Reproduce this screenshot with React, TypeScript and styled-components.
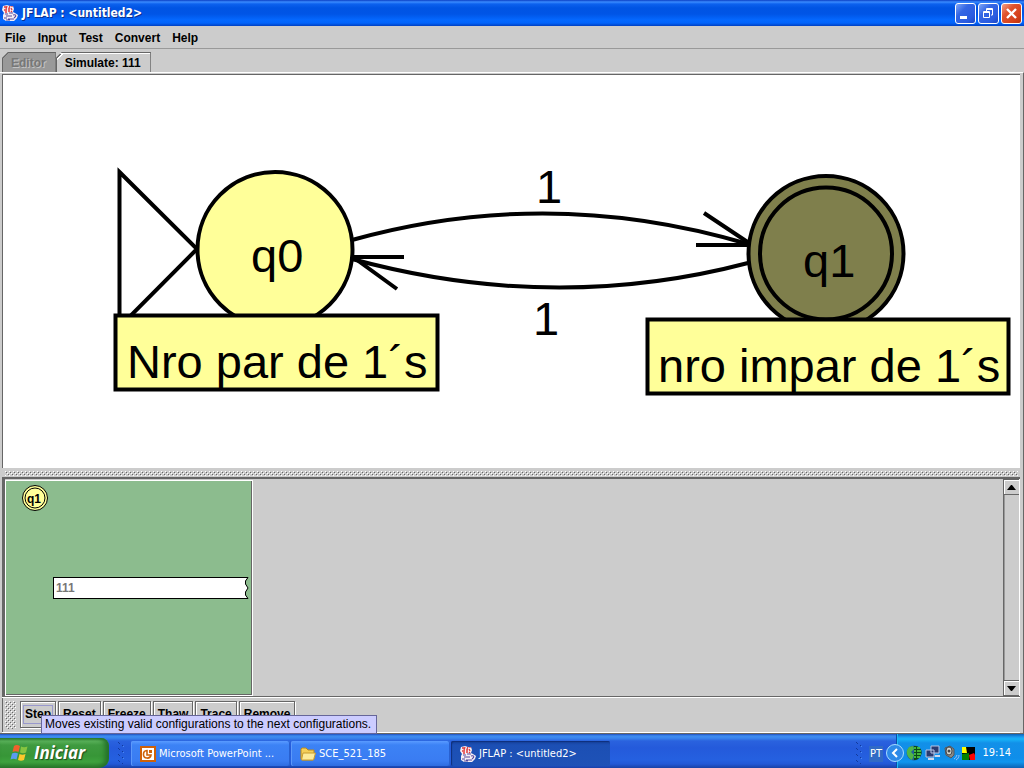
import React from "react";
import styled, { createGlobalStyle, css } from "styled-components";

const GlobalStyle = createGlobalStyle`
  *, *::before, *::after { box-sizing: border-box; }
  body { margin: 0; background: #ccc; font-family: "Liberation Sans", Arial, sans-serif; }
  button { font: inherit; color: inherit; padding: 0; border: 0; background: none; cursor: default; }
`;

const dot = (color: string) =>
  `conic-gradient(from 270deg at 1px 1px, ${color} 90deg, transparent 0)`;

const bumps = css`
  background-image: ${dot("#fff")}, ${dot("#fff")}, ${dot("#666")}, ${dot("#666")};
  background-size: 4px 4px;
  background-position: 0 0, 2px 2px, 1px 1px, 3px 3px;
`;

const Desktop = styled.div`
  min-height: 100vh;
  display: flex;
  flex-direction: column;
  background: #ccc;
`;

const TitleBar = styled.header`
  height: 26px;
  display: flex;
  align-items: center;
  gap: 4px;
  padding: 0 2px;
  background: linear-gradient(#0b3fc4 0, #3a8bff 2px, #0c61ee 4px, #0054e3 8px, #0055e6 14px, #0468ff 20px, #0264fb 23px, #0040c2 26px);
`;

const Title = styled.h1`
  flex: 1;
  margin: 0;
  font: bold 12px/16px "DejaVu Sans Condensed", "DejaVu Sans", sans-serif;
  color: #fff;
  text-shadow: 1px 1px #0b2f8c;
`;

const CaptionButtons = styled.div`
  display: flex;
  gap: 2px;
`;

const CaptionButton = styled.button<{ $close?: boolean }>`
  width: 21px;
  height: 21px;
  display: grid;
  place-items: center;
  border: 1px solid #fff;
  border-radius: 3px;
  background: ${(p) =>
    p.$close
      ? "linear-gradient(135deg, #f0a088 0, #e0532e 35%, #d4401a 75%, #b8330f)"
      : "linear-gradient(135deg, #7fa6f8 0, #3466e4 35%, #2a5be0 75%, #1b46c4)"};
`;

const MenuBar = styled.nav`
  height: 23px;
  display: flex;
  align-items: flex-end;
  gap: 12px;
  padding: 0 5px 2px;
  border-bottom: 1px solid #999;
`;

const MenuItem = styled.button`
  font-size: 12px;
  line-height: 16px;
  font-weight: bold;
`;

const TabBar = styled.div`
  height: 23px;
  display: flex;
  align-items: flex-end;
  padding-left: 2px;
`;

const Tab = styled.button<{ $selected?: boolean }>`
  height: 20px;
  padding: 0 9px 0 8px;
  font-size: 12px;
  line-height: 18px;
  font-weight: bold;
  border: solid #666;
  border-width: 1px 1px 0;
  clip-path: polygon(6px 0, 100% 0, 100% 100%, 0 100%, 0 6px);
  background:
    linear-gradient(135deg, ${(p) => (p.$selected ? "#666 0 4px, #fff 4px 5px" : "#666 0 4px, #999 4px 5px")}, transparent 5px),
    ${(p) => (p.$selected ? "#ccc" : "#999")};
  ${(p) =>
    p.$selected
      ? "box-shadow: inset 0 1px #fff;"
      : "color: #777; text-shadow: 1px 1px #c4c4c4;"}
`;

const Workspace = styled.main`
  flex: 1;
  display: flex;
  flex-direction: column;
  padding: 0 3px 0 2px;
  border-top: 1px solid #fff;
  border-right: 1px solid #666;
  border-bottom: 1px solid #666;
`;

const Canvas = styled.section`
  flex: 1;
  display: flex;
  min-height: 394px;
  margin-top: 1px;
  border: solid #666;
  border-width: 1px 0 0 1px;
  background: #fff;
`;

const Diagram = styled.svg`
  flex: 1;
  width: 100%;
  display: block;
  font-family: "Liberation Sans", Arial, sans-serif;
  font-size: 47px;
`;

const Splitter = styled.div`
  height: 9px;
  padding: 3px 2px 1px 3px;
  display: flex;
`;

const SplitterGrip = styled.div`
  flex: 1;
  ${bumps}
`;

const ConfigPane = styled.section`
  height: 220px;
  display: flex;
  border: solid #666;
  border-width: 2px 0 1px 3px;
`;

const ConfigList = styled.div`
  flex: 1;
  display: flex;
  padding-top: 1px;
`;

const ConfigCard = styled.article`
  width: 248px;
  display: flex;
  flex-direction: column;
  gap: 65px;
  padding: 3px 3px 0 15px;
  background: #8cbc8e;
  border: 1px solid #fff;
  box-shadow: inset -1px -1px #666;
`;

const Tape = styled.div`
  display: flex;
  margin-left: 32px;
  height: 22px;
`;

const TapeText = styled.span`
  flex: 1;
  padding: 0 2px;
  border: solid #000;
  border-width: 1px 0 1px 1px;
  background: #fff;
  color: #777;
  font-size: 12px;
  line-height: 21px;
  font-weight: bold;
`;

const ScrollBar = styled.div`
  width: 17px;
  display: flex;
  flex-direction: column;
  justify-content: space-between;
  border-left: 1px solid #666;
  border-right: 1px solid #fff;
  box-shadow: inset 1px 0 #999;
`;

const ScrollButton = styled.button`
  height: 16px;
  display: grid;
  place-items: center;
  border: 1px solid #666;
  border-width: 1px 0 1px 0;
  box-shadow: inset 1px 1px #fff;
`;

const ToolBar = styled.div`
  height: 36px;
  display: flex;
  align-items: flex-start;
  gap: 2px;
  padding: 3px 2px;
  border: solid #fff;
  border-width: 1px 0 1px 0;
  box-shadow: inset 1px 0 #666, 0 -1px #666;
`;

const ToolGrip = styled.div`
  width: 11px;
  height: 28px;
  margin: 0 2px 0 1px;
  ${bumps}
`;

const ToolButton = styled.button<{ $focused?: boolean }>`
  height: 27px;
  padding: 0 2px;
  border: 1px solid #666;
  box-shadow: inset 1px 1px #fff, 1px 1px #fff;
  font-size: 12px;
  line-height: 17px;
  font-weight: bold;
  span {
    display: block;
    padding: 0 1px;
    border: 1px solid ${(p) => (p.$focused ? "#9999cc" : "transparent")};
  }
`;

const StepHolder = styled.div`
  position: relative;
  display: flex;
`;

const ToolTip = styled.div`
  position: absolute;
  z-index: 1;
  left: 21px;
  top: 14px;
  padding: 0 5px 0 3px;
  border: 1px solid #666699;
  background: #ccccff;
  font-size: 12px;
  line-height: 17px;
  white-space: nowrap;
`;

const TaskBar = styled.footer`
  height: 34px;
  display: flex;
  align-items: stretch;
  background: linear-gradient(#1f4fc0 0, #3d8cf0 2px, #3a86ee 4px, #2a62de 7px, #245adb 14px, #2560e0 26px, #2358d6 30px, #1941a5 34px);
  font: 11px/16px "DejaVu Sans Condensed", "DejaVu Sans", sans-serif;
  color: #fff;
`;

const StartButton = styled.button`
  width: 109px;
  margin-top: 4px;
  padding: 0 0 0 10px;
  display: flex;
  align-items: center;
  gap: 5px;
  border-radius: 0 8px 10px 0;
  background: linear-gradient(#2f7d31 0, #5cb45c 3px, #3f9a40 7px, #379637 18px, #3ea23e 24px, #2b7a2c 30px);
  box-shadow: inset -4px 0 5px #24702a;
  font: italic bold 17px/20px "Open Sans", "Liberation Sans", sans-serif;
  text-shadow: 1px 1px 1px #1c4a1c;
`;

const TaskGrip = styled.div<{ $push?: boolean }>`
  width: 8px;
  margin: 8px 5px 4px ${(p) => (p.$push ? "auto" : "9px")};
  background-image: ${dot("#123a9c")}, ${dot("#123a9c")}, ${dot("#123a9c")}, ${dot("#4b8af2")};
  background-size: 8px 6px;
  background-position: 0 0, 1px 1px, 4px 3px, 5px 4px;
`;

const TaskList = styled.div`
  flex: 0 1 479px;
  display: grid;
  grid-template-columns: repeat(3, 1fr);
  gap: 1px;
  padding: 7px 0 2px;
`;

const TaskButton = styled.button<{ $active?: boolean }>`
  min-width: 0;
  display: flex;
  align-items: center;
  gap: 3px;
  padding: 0 9px;
  border-radius: 2px;
  white-space: nowrap;
  background: ${(p) =>
    p.$active
      ? "linear-gradient(#153f98, #1c4fb4 4px, #1e52b7)"
      : "linear-gradient(#5a9bff, #3c82f5 4px, #3a7cf2 20px, #2f6de0)"};
  box-shadow: ${(p) => (p.$active ? "inset 1px 1px 1px #0f2f7c" : "inset -1px 0 #2860d0, inset 1px 0 #5c98fa")};
`;

const Language = styled.button`
  align-self: flex-end;
  margin-bottom: 6px;
  height: 16px;
  padding: 0 1px;
  background: #316ac5;
`;

const Tray = styled.div`
  position: relative;
  width: 128px;
  display: flex;
  align-items: center;
  justify-content: space-between;
  margin-left: 13px;
  padding: 4px 13px 0 10px;
  background: linear-gradient(#0e62b8 0, #1a9cf0 3px, #18b4f8 5px, #1290e8 9px, #0f8eea 24px, #1096ee 28px, #0d62b4 34px);
  box-shadow: inset 1px 0 #0b4ca8, inset 2px 0 #1dbbf6;
`;

const TrayIcons = styled.div`
  display: flex;
  align-items: center;
  gap: 2px;
`;

const CollapseButton = styled.button`
  position: absolute;
  left: -10px;
  top: 10px;
  width: 18px;
  height: 18px;
`;

const JavaIcon = () => (
  <svg width="16" height="16" viewBox="0 0 16 16" aria-hidden="true">
    <path d="M1 1l4-1 3 1 3 0 1 3-1 3 2 1 3 2-1 3-3 3H4l-3-2 0-4 1-2-2-3z" fill="#f6eef4" />
    <path d="M2 2h2M5 1l-1 3M6 4h2M8 1l-1 2M9 3l1 2M2 5h3M6 6h2M9 7l1-1M3 7h2M10 1v1" fill="none" stroke="#e23a3a" strokeWidth="1.300" />
    <path d="M3 9h3M7 8h4M4 11h6M2 13h3M6 14h6M11 10c3-1 4 1 1 3M4 15h4" fill="none" stroke="#55489c" strokeWidth="1.100" />
  </svg>
);

const WindowsFlag = () => (
  <svg width="19" height="18" viewBox="0 0 19 18" aria-hidden="true">
    <path d="M4 2c2-1.500 4-1 6 0L8.500 8c-2-1-4-1-6 0z" fill="#f0602c" />
    <path d="M11 2.500c2 1 4 1 6.500 0L16 8.500c-2 1-4 1-6 0z" fill="#86c440" />
    <path d="M2 9.500c2-1 4-1 6 0L6.500 15.500c-2-1-4-1-6 0z" fill="#5a9cf0" />
    <path d="M9.500 10c2 1 4 1 6 0L14 16c-2 1-4 1-6 0z" fill="#fcc82c" />
  </svg>
);

const PowerPointIcon = () => (
  <svg width="16" height="16" viewBox="0 0 16 16" aria-hidden="true">
    <path d="M0 0h16v16H0z" fill="#cf6109" />
    <path d="M2 2h12v12H2z" fill="#fff" />
    <path d="M7 4.500A3.800 3.800 0 1 0 11 9H7z" fill="none" stroke="#cf6109" strokeWidth="1.600" />
    <path d="M9 4h3v3H9z" fill="#cf6109" />
  </svg>
);

const FolderIcon = () => (
  <svg width="16" height="16" viewBox="0 0 16 16" aria-hidden="true">
    <path d="M1 3l1-1h4l2 2h6v9l-1 1H2l-1-1z" fill="#f4cf58" stroke="#b88a20" strokeWidth="1" />
    <path d="M3 7h12.500l-2 7H1.500z" fill="#fdeb98" stroke="#c89c30" strokeWidth="1" />
  </svg>
);

const GlobeIcon = () => (
  <svg width="17" height="16" viewBox="0 0 17 16" aria-hidden="true">
    <circle cx="8" cy="8" r="7.500" fill="#1f5f9c" />
    <path d="M3 2l4-1 1 3-3 3 3 3-2 5C2 13 0 9 1 5z" fill="#4fb648" />
    <path d="M8 1c6-1 9 5 7 9s-4 5-7 5z" fill="#0b4a16" />
    <path d="M8 3h2M11 3h3M8 6h2M11 6h4M8 9h2M11 9h4M8 12h2M11 12h3" stroke="#55dc48" strokeWidth="1.500" />
  </svg>
);

const NetworkIcon = () => (
  <svg width="16" height="16" viewBox="0 0 16 16" aria-hidden="true">
    <path d="M6 1h8v7H6zM1 5h8v7H1z" fill="#2a3a70" stroke="#b8c4e4" />
    <path d="M10 10h5v2h-5zM3 13h6v2H3z" fill="#d0d8ec" />
  </svg>
);

const SpeakerIcon = () => (
  <svg width="17" height="16" viewBox="0 0 17 16" aria-hidden="true">
    <path d="M2 3l5-2 4 3v6l-3 3-5-3z" fill="#8a8a86" stroke="#55565a" />
    <ellipse cx="6" cy="6" rx="3" ry="4" fill="#d8d8d0" stroke="#44464c" />
    <circle cx="6" cy="6" r="1.500" fill="#44464c" />
    <path d="M11 14c2-1 2-2 3-4M13 15c2-1 3-3 3-5" fill="none" stroke="#9cc4fa" />
  </svg>
);

const BlocksIcon = () => (
  <svg width="13" height="13" viewBox="0 0 13 13" aria-hidden="true">
    <path d="M0 0h13v13H0z" fill="#000" />
    <path d="M0 0h4l1 6H0z" fill="#ff0" />
    <path d="M0 7l7-1v7H0z" fill="#008000" />
    <path d="M7 8l5-2 1 2v5H8z" fill="#f00" />
  </svg>
);

const menus = ["File", "Input", "Test", "Convert", "Help"];
const actions = ["Reset", "Freeze", "Thaw", "Trace", "Remove"];

const Automaton = () => (
  <Diagram role="img" aria-label="Finite automaton">
    <g fill="none" stroke="#000" strokeWidth="4">
      <path d="M349 165Q546 110 745 169" />
      <path d="M701 138L746 168M693 170H746" />
      <path d="M745 188Q551 239 349 184" />
      <path d="M401 182H350L394 214" />
      <path d="M116.500 97L194 174L116.500 252Z" />
    </g>
    <g stroke="#000" strokeWidth="4">
      <circle cx="272" cy="174.500" r="77.500" fill="#ffff99" />
      <circle cx="823" cy="178.500" r="77.500" fill="#7f7f4c" />
      <circle cx="823" cy="178.500" r="66" fill="none" />
      <rect x="112.500" y="240.500" width="322" height="74" fill="#ffff99" />
      <rect x="644.500" y="244.500" width="361" height="74" fill="#ffff99" />
    </g>
    <text x="248" y="197">q0</text>
    <text x="800" y="202">q1</text>
    <text x="533" y="128">1</text>
    <text x="530" y="260">1</text>
    <text x="124" y="303">Nro par de 1´s</text>
    <text x="655" y="307">nro impar de 1´s</text>
  </Diagram>
);

export default function App() {
  return (
    <>
      <GlobalStyle />
      <Desktop>
        <TitleBar>
          <JavaIcon />
          <Title>JFLAP : &lt;untitled2&gt;</Title>
          <CaptionButtons>
            <CaptionButton aria-label="Minimize">
              <svg width="19" height="19"><path d="M4 12h7v3H4z" fill="#fff" /></svg>
            </CaptionButton>
            <CaptionButton aria-label="Restore">
              <svg width="19" height="19" fill="none" stroke="#fff">
                <path d="M7.500 7V4.500h6V11H12M7 5.500h7" />
                <path d="M4.500 7.500h6v6h-6zM4 8.500h7" />
              </svg>
            </CaptionButton>
            <CaptionButton $close aria-label="Close">
              <svg width="19" height="19"><path d="M5 5l9 9M14 5l-9 9" stroke="#fff" strokeWidth="2.400" /></svg>
            </CaptionButton>
          </CaptionButtons>
        </TitleBar>
        <MenuBar>
          {menus.map((m) => <MenuItem key={m}>{m}</MenuItem>)}
        </MenuBar>
        <TabBar role="tablist">
          <Tab role="tab" disabled>Editor</Tab>
          <Tab role="tab" $selected aria-selected="true">Simulate: 111</Tab>
        </TabBar>
        <Workspace>
          <Canvas><Automaton /></Canvas>
          <Splitter><SplitterGrip /></Splitter>
          <ConfigPane>
            <ConfigList>
              <ConfigCard>
                <svg width="28" height="28" viewBox="0 0 28 28" role="img" aria-label="State q1">
                  <circle cx="14" cy="14" r="12.500" fill="#ffff99" stroke="#000" />
                  <circle cx="14" cy="14" r="10" fill="none" stroke="#000" />
                  <text x="6" y="19" fontSize="12" fontWeight="bold">q1</text>
                </svg>
                <Tape>
                  <TapeText>111</TapeText>
                  <svg width="5" height="22" viewBox="0 0 5 22" aria-hidden="true">
                    <path d="M0 0H4L1 4V7L4 11L1 15V18L4 22H0Z" fill="#fff" />
                    <path d="M0 .5H4L1.500 4V7L4 11L1.500 15V18L4 21.500H0" fill="none" stroke="#000" />
                  </svg>
                </Tape>
              </ConfigCard>
            </ConfigList>
            <ScrollBar>
              <ScrollButton aria-label="Scroll up">
                <svg width="9" height="5"><path d="M0 5L4 0H5L9 5z" /></svg>
              </ScrollButton>
              <ScrollButton aria-label="Scroll down">
                <svg width="9" height="5"><path d="M0 0L4 5H5L9 0z" /></svg>
              </ScrollButton>
            </ScrollBar>
          </ConfigPane>
          <ToolBar role="toolbar">
            <ToolGrip />
            <StepHolder>
              <ToolButton $focused aria-describedby="step-tip"><span>Step</span></ToolButton>
              <ToolTip id="step-tip" role="tooltip">
                Moves existing valid configurations to the next configurations.
              </ToolTip>
            </StepHolder>
            {actions.map((a) => <ToolButton key={a}><span>{a}</span></ToolButton>)}
          </ToolBar>
        </Workspace>
        <TaskBar>
          <StartButton><WindowsFlag />Iniciar</StartButton>
          <TaskGrip />
          <TaskList>
            <TaskButton><PowerPointIcon />Microsoft PowerPoint ...</TaskButton>
            <TaskButton><FolderIcon />SCE_521_185</TaskButton>
            <TaskButton $active><JavaIcon />JFLAP : &lt;untitled2&gt;</TaskButton>
          </TaskList>
          <TaskGrip $push />
          <Language>PT</Language>
          <Tray>
            <CollapseButton aria-label="Hide icons">
              <svg width="18" height="18" viewBox="0 0 18 18">
                <circle cx="9" cy="9" r="8.500" fill="#2d8ae8" stroke="#a8dcff" />
                <path d="M11 5L7 9l4 4" fill="none" stroke="#fff" strokeWidth="2" />
              </svg>
            </CollapseButton>
            <TrayIcons><GlobeIcon /><NetworkIcon /><SpeakerIcon /><BlocksIcon /></TrayIcons>
            <time>19:14</time>
          </Tray>
        </TaskBar>
      </Desktop>
    </>
  );
}
